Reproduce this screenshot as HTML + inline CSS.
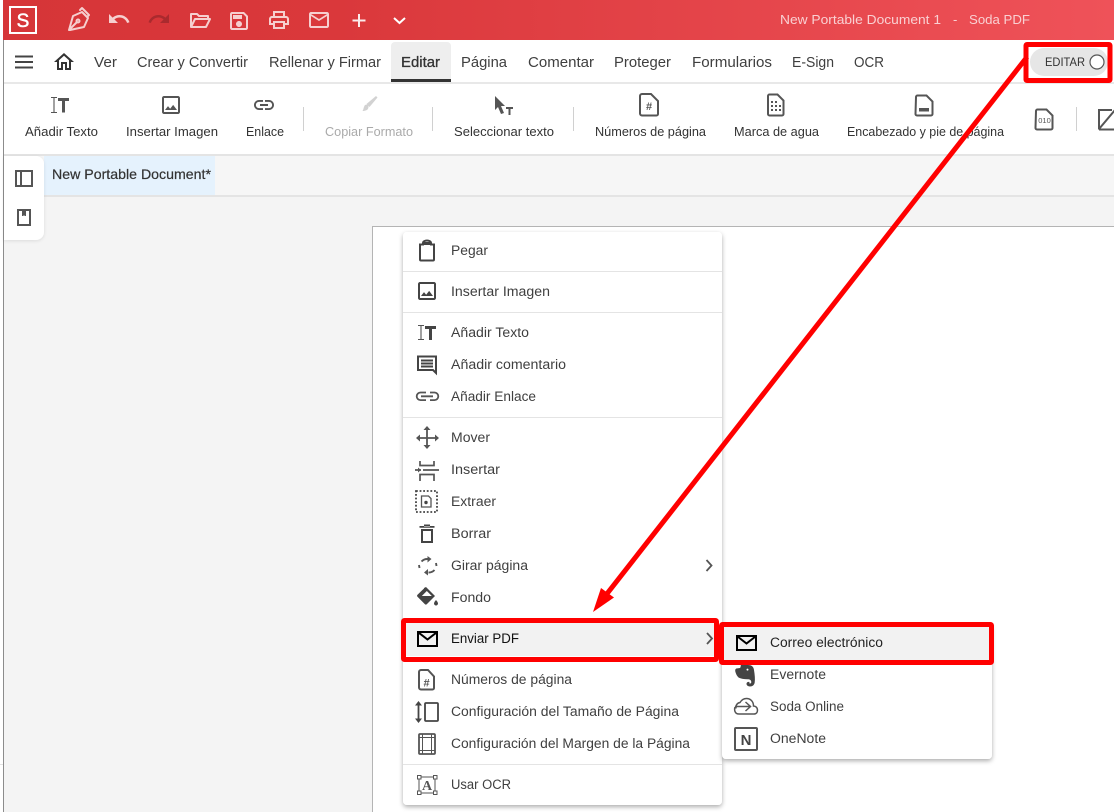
<!DOCTYPE html>
<html><head><meta charset="utf-8"><style>
html,body{margin:0;padding:0;background:#fff;overflow:hidden}
svg{display:block}
text{font-family:"Liberation Sans",sans-serif}
.m{font-size:14.5px;fill:#3f3f3f}
.t{font-size:12.5px;fill:#333}
.i{font-size:13.5px;fill:#3f3f3f}
.ic{fill:#555}
.st{fill:none;stroke:#555;stroke-width:2}
.tb{fill:#f6cfcf}
.tbs{fill:none;stroke:#f6cfcf;stroke-width:2}
</style></head><body>
<svg width="1114" height="812" viewBox="0 0 1114 812" xmlns="http://www.w3.org/2000/svg">
<defs>
<linearGradient id="g" x1="0" x2="1" y1="0" y2="0"><stop offset="0" stop-color="#d63538"/><stop offset=".3" stop-color="#da383b"/><stop offset="1" stop-color="#ef5259"/></linearGradient>
<filter id="sh" x="-10%" y="-10%" width="120%" height="120%"><feDropShadow dx="0" dy="2" stdDeviation="2.5" flood-color="#000" flood-opacity=".32"/></filter>
<filter id="sh2" x="-20%" y="-20%" width="140%" height="140%"><feDropShadow dx="0" dy="1" stdDeviation="1.5" flood-color="#000" flood-opacity=".1"/></filter>
</defs>
<rect width="1114" height="812" fill="#fff"/>
<rect x="3" y="0" width="1111" height="40" fill="url(#g)"/>
<rect x="3" y="40" width="1" height="772" fill="#8c8c8c"/>
<rect x="0" y="764" width="3" height="1" fill="#e2e2e2"/>
<!-- backgrounds -->
<rect x="4" y="82" width="1110" height="2" fill="#e8e8e8"/>
<rect x="4" y="155" width="1110" height="657" fill="#f4f4f4"/>
<rect x="4" y="154" width="1110" height="2" fill="#e4e4e4"/>
<rect x="4" y="156" width="1110" height="39" fill="#f6f6f6"/>
<rect x="44" y="156" width="171" height="39" fill="#e5f2fd"/>
<rect x="4" y="195" width="1110" height="2" fill="#e4e4e4"/>
<rect x="372.500" y="226.500" width="742" height="600" fill="#fff" stroke="#b4b4b4"/>
<!-- title bar -->
<rect x="10" y="7" width="26" height="26" fill="none" stroke="#fff" stroke-width="2"/>
<text x="23" y="27" text-anchor="middle" style="font-size:19px;stroke:#fff;stroke-width:.5" fill="#fff">S</text>
<g class="tbs" stroke-linejoin="round" stroke-linecap="round">
<path d="M69 30l4-14 9-4 6 6-4 9-14 3zM69 30l8-8M80 10l2-2 7 7-2 2"/><circle cx="78" cy="21" r="1.500"/>
<path d="M191 27V14h6l2 2h9v3M191 27l4-8h15l-4 8z"/>
</g>
<path class="tb" transform="translate(107,7)" d="M12.500 8c-2.650 0-5.050.99-6.900 2.600L2 7v9h9l-3.620-3.620c1.390-1.160 3.160-1.880 5.120-1.880 3.540 0 6.550 2.310 7.600 5.500l2.370-.78C21.080 11.030 17.150 8 12.500 8z"/>
<path fill="#aa2a2e" transform="translate(147,7)" d="M18.400 10.600C16.550 8.990 14.150 8 11.500 8c-4.650 0-8.580 3.030-10 7.220L3.900 16c1.050-3.190 4.050-5.500 7.600-5.500 1.950 0 3.730.72 5.120 1.880L13 16h9V7l-3.600 3.600z"/>
<path class="tb" transform="translate(227,9)" d="M17 3H5c-1.110 0-2 .9-2 2v14c0 1.100.89 2 2 2h14c1.100 0 2-.9 2-2V7l-4-4zm2 16H5V5h11.170L19 7.830V19zm-7-7c-1.660 0-3 1.340-3 3s1.340 3 3 3 3-1.340 3-3-1.340-3-3-3zM6 6h9v4H6z"/>
<path class="tb" transform="translate(267,8)" d="M19 8h-1V3H6v5H5c-1.660 0-3 1.340-3 3v6h4v4h12v-4h4v-6c0-1.660-1.340-3-3-3zM8 5h8v3H8V5zm8 12v2H8v-4h8v2zm2-2v-2H6v2H4v-4c0-.55.45-1 1-1h14c.55 0 1 .45 1 1v4h-2z"/>
<path class="tb" transform="translate(307,8)" d="M22 6c0-1.100-.9-2-2-2H4c-1.100 0-2 .9-2 2v12c0 1.100.9 2 2 2h16c1.100 0 2-.9 2-2V6zm-2 0l-8 5-8-5h16zm0 12H4V8l8 5 8-5v10z"/>
<path d="M359 14v13M352.500 20.500h13" stroke="#fff" stroke-width="2" opacity=".9"/>
<path d="M394 18l5.500 5 5.500-5" fill="none" stroke="#fff" stroke-width="2"/>
<g style="font-size:13px" fill="#f9d0d2">
<text x="780" y="24" textLength="161" lengthAdjust="spacingAndGlyphs">New Portable Document 1</text>
<text x="953" y="24">-</text>
<text x="969" y="24" textLength="61" lengthAdjust="spacingAndGlyphs">Soda PDF</text>
</g>
<!-- menu row -->
<path d="M391 46a4 4 0 0 1 4-4h52a4 4 0 0 1 4 4v36h-60z" fill="#eee"/>
<rect x="391" y="79" width="60" height="3" fill="#333"/>
<path d="M15 56.500h18M15 62h18M15 67.500h18" stroke="#444" stroke-width="2"/>
<path fill="#333" transform="translate(52,50)" d="M12 5.690l5 4.500V18h-2v-6H9v6H7v-7.810l5-4.500M12 3L2 12h3v8h6v-6h2v6h6v-8h3L12 3z"/>
<text class="m" x="94" y="67" textLength="23" lengthAdjust="spacingAndGlyphs">Ver</text>
<text class="m" x="137" y="67" textLength="111" lengthAdjust="spacingAndGlyphs">Crear y Convertir</text>
<text class="m" x="269" y="67" textLength="112" lengthAdjust="spacingAndGlyphs">Rellenar y Firmar</text>
<text class="m" x="401" y="67" textLength="39" lengthAdjust="spacingAndGlyphs" style="fill:#333;stroke:#333;stroke-width:.3">Editar</text>
<text class="m" x="461" y="67" textLength="46" lengthAdjust="spacingAndGlyphs">Página</text>
<text class="m" x="528" y="67" textLength="66" lengthAdjust="spacingAndGlyphs">Comentar</text>
<text class="m" x="614" y="67" textLength="57" lengthAdjust="spacingAndGlyphs">Proteger</text>
<text class="m" x="692" y="67" textLength="80" lengthAdjust="spacingAndGlyphs">Formularios</text>
<text class="m" x="792" y="67" textLength="42" lengthAdjust="spacingAndGlyphs">E-Sign</text>
<text class="m" x="854" y="67" textLength="30" lengthAdjust="spacingAndGlyphs">OCR</text>
<rect x="1030" y="48" width="78" height="28" rx="14" fill="#e6e6e6"/>
<text x="1045" y="66" textLength="40" lengthAdjust="spacingAndGlyphs" style="font-size:12px" fill="#333">EDITAR</text>
<circle cx="1097" cy="62" r="7" fill="#fff" stroke="#555" stroke-width="1.200"/>
<!-- toolbar icons -->
<g fill="#555">
<path d="M51 97.500h6M51 112.500h6M54 97.500v15" stroke="#555" stroke-width="1.100" fill="none"/>
<path d="M58 98h11v3h-4v11.500h-3V101h-4z"/>
<path transform="translate(159,93)" d="M19 5v14H5V5h14m0-2H5c-1.100 0-2 .9-2 2v14c0 1.100.9 2 2 2h14c1.100 0 2-.9 2-2V5c0-1.100-.9-2-2-2zm-4.860 8.860l-3 3.870L9 13.140 6 17h12l-3.860-5.140z"/>
<path transform="translate(252,93)" d="M3.900 12c0-1.710 1.390-3.100 3.100-3.100h4V7H7c-2.760 0-5 2.240-5 5s2.240 5 5 5h4v-1.900H7c-1.710 0-3.100-1.390-3.100-3.100zM8 13h8v-2H8v2zm9-6h-4v1.900h4c1.710 0 3.100 1.390 3.100 3.100s-1.390 3.100-3.100 3.100h-4V17h4c2.760 0 5-2.240 5-5s-2.240-5-5-5z"/>
<path d="M495 96l10 10h-4l3 7-3 1-3-7-3 3zM506 107h7v2h-2.500v6h-2v-6H506z"/>
</g>
<path d="M376 96l1.500 1.500-8 9.500-3-3zM365 105c2-1 3.500 0 3.500 2 0 3-3 4-6 4 1-1 1-4 2.500-6z" fill="#d2d2d2"/>
<path d="M303.500 107v24M432.500 107v24M573.500 107v24M1076.500 107v24" stroke="#d0d0d0"/>
<path class="st" d="M640 96a2 2 0 0 1 2-2h9l7 7v13a1.500 1.500 0 0 1-1.500 1.500H642a2 2 0 0 1-2-2z"/>
<text x="649" y="110" text-anchor="middle" style="font-size:11px;font-weight:bold" fill="#555">#</text>
<path class="st" d="M768 96a1.500 1.500 0 0 1 1.500-1.500h8l6 6V114a1.500 1.500 0 0 1-1.500 1.500h-12.500a1.500 1.500 0 0 1-1.500-1.500z"/>
<g fill="#555"><path d="M771 101h2v2h-2zM775 101h2v2h-2zM771 105h2v2h-2zM775 105h2v2h-2zM779 105h2v2h-2zM771 109h2v2h-2zM775 109h2v2h-2zM779 109h2v2h-2z"/></g>
<path class="st" d="M916 97a1.500 1.500 0 0 1 1.500-1.500h9l6 6V114a1.500 1.500 0 0 1-1.500 1.500h-14a1.500 1.500 0 0 1-1.500-1.500z"/>
<path d="M919 108h10v3.500h-10z" fill="#555"/>
<path class="st" d="M1036 111a1.500 1.500 0 0 1 1.500-1.500h9l6 6V128a1.500 1.500 0 0 1-1.500 1.500h-14a1.500 1.500 0 0 1-1.500-1.500z"/>
<text x="1044.500" y="123" text-anchor="middle" style="font-size:7.500px" fill="#555">010</text>
<path class="st" d="M1099 129.500V110h13M1099 129.500h16M1099 129l16-19"/>
<text class="t" x="25" y="136" textLength="73" lengthAdjust="spacingAndGlyphs">Añadir Texto</text>
<text class="t" x="126" y="136" textLength="92" lengthAdjust="spacingAndGlyphs">Insertar Imagen</text>
<text class="t" x="246" y="136" textLength="38" lengthAdjust="spacingAndGlyphs">Enlace</text>
<text class="t" x="325" y="136" textLength="88" lengthAdjust="spacingAndGlyphs" style="fill:#aaa">Copiar Formato</text>
<text class="t" x="454" y="136" textLength="100" lengthAdjust="spacingAndGlyphs">Seleccionar texto</text>
<text class="t" x="595" y="136" textLength="111" lengthAdjust="spacingAndGlyphs">Números de página</text>
<text class="t" x="734" y="136" textLength="85" lengthAdjust="spacingAndGlyphs">Marca de agua</text>
<text class="t" x="847" y="136" textLength="157" lengthAdjust="spacingAndGlyphs">Encabezado y pie de página</text>
<!-- sidebar + tab -->
<path d="M4 156h32a8 8 0 0 1 8 8v68a8 8 0 0 1-8 8H4z" fill="#fff" filter="url(#sh2)"/>
<path class="st" d="M16 171h16v15H16zM21 171v15"/>
<path class="st" d="M18 210h12v15H18z"/><path d="M22 210h4v6h-1.300l-.7-1-.7 1H22z" fill="#555"/>
<text x="52" y="179" textLength="159" lengthAdjust="spacingAndGlyphs" style="font-size:14px;stroke:#333;stroke-width:.2" fill="#333">New Portable Document*</text>
<!-- context menu -->
<rect x="403" y="232" width="319" height="573" rx="4" fill="#fff" filter="url(#sh)"/>
<g fill="#e4e4e4"><rect x="403" y="271" width="319" height="1"/><rect x="403" y="312" width="319" height="1"/><rect x="403" y="417" width="319" height="1"/><rect x="403" y="764" width="319" height="1"/></g>
<rect x="406" y="622" width="310" height="34" fill="#f2f2f2"/>
<text class="i" x="451" y="255" textLength="37" lengthAdjust="spacingAndGlyphs">Pegar</text>
<text class="i" x="451" y="296" textLength="99" lengthAdjust="spacingAndGlyphs">Insertar Imagen</text>
<text class="i" x="451" y="337" textLength="78" lengthAdjust="spacingAndGlyphs">Añadir Texto</text>
<text class="i" x="451" y="369" textLength="115" lengthAdjust="spacingAndGlyphs">Añadir comentario</text>
<text class="i" x="451" y="401" textLength="85" lengthAdjust="spacingAndGlyphs">Añadir Enlace</text>
<text class="i" x="451" y="442" textLength="39" lengthAdjust="spacingAndGlyphs">Mover</text>
<text class="i" x="451" y="474" textLength="49" lengthAdjust="spacingAndGlyphs">Insertar</text>
<text class="i" x="451" y="506" textLength="45" lengthAdjust="spacingAndGlyphs">Extraer</text>
<text class="i" x="451" y="538" textLength="40" lengthAdjust="spacingAndGlyphs">Borrar</text>
<text class="i" x="451" y="570" textLength="77" lengthAdjust="spacingAndGlyphs">Girar página</text>
<text class="i" x="451" y="602" textLength="40" lengthAdjust="spacingAndGlyphs">Fondo</text>
<text class="i" x="451" y="643" textLength="68" lengthAdjust="spacingAndGlyphs" style="fill:#111">Enviar PDF</text>
<text class="i" x="451" y="684" textLength="121" lengthAdjust="spacingAndGlyphs">Números de página</text>
<text class="i" x="451" y="716" textLength="228" lengthAdjust="spacingAndGlyphs">Configuración del Tamaño de Página</text>
<text class="i" x="451" y="748" textLength="239" lengthAdjust="spacingAndGlyphs">Configuración del Margen de la Página</text>
<text class="i" x="451" y="789" textLength="60" lengthAdjust="spacingAndGlyphs">Usar OCR</text>
<!-- menu icons -->
<path class="st" d="M420 244.500h3v-1.500a4 2.500 0 0 1 8 0v1.500h3v15a1 1 0 0 1-1 1h-12a1 1 0 0 1-1-1z" style="stroke:#444"/>
<path d="M424 242h6v3h-6z" fill="#444"/>
<path fill="#444" transform="translate(415,279)" d="M19 5v14H5V5h14m0-2H5c-1.100 0-2 .9-2 2v14c0 1.100.9 2 2 2h14c1.100 0 2-.9 2-2V5c0-1.100-.9-2-2-2zm-4.860 8.860l-3 3.870L9 13.140 6 17h12l-3.860-5.140z"/>
<path d="M418 325.500h6M418 339.500h6M421 325.500v14" stroke="#555" stroke-width="1.100" fill="none"/>
<path d="M425 326h11v3h-4v11h-3v-11h-4z" fill="#444"/>
<path d="M418 356.500h18v16.500l-3-3h-15zM421 360.500h12M421 363.500h12M421 366.500h12" fill="none" stroke="#444" stroke-width="2"/>
<path d="M426 392.500h-5.500a3.800 3.800 0 0 0 0 7.600H426M430 392.500h4.500a3.800 3.800 0 0 1 0 7.600H430M421 396.300h12" fill="none" stroke="#555" stroke-width="1.800"/>
<path d="M427 428v20M417 438h21" stroke="#555" stroke-width="1.800"/>
<path d="M427 426l-3.500 4h7zM427 449l-3.500-4h7zM416 438l4-3.500v7zM439 438l-4-3.500v7z" fill="#555"/>
<path d="M420 461v4.500h14V461M420 481v-6.500h14V481M423 470h16M415 470h6" fill="none" stroke="#555" stroke-width="1.700"/>
<path d="M421 470l-3-2.500v5z" fill="#555"/>
<rect x="416" y="491" width="21" height="21" fill="none" stroke="#444" stroke-width="1.800" stroke-dasharray="1.800 1.800"/>
<path d="M421.500 496h7l2.500 2.500v8.500h-9.500z" fill="none" stroke="#555" stroke-width="1.300"/><circle cx="426" cy="502.500" r="1.700" fill="#444"/>
<path fill="#444" d="M421 529h12v14h-12zM423 531v10h8v-10zM419.500 526h15v1.800h-15zM424 524.500h6v2h-6z" fill-rule="evenodd"/>
<path d="M421.500 561.500a8 8 0 0 1 6-2.500M434.500 570a8 8 0 0 1-6 2.500M419.500 568l-.5-3M436 563l.5 3" fill="none" stroke="#555" stroke-width="1.900"/>
<path d="M427.500 556l4 3-4 3.500zM428 569l-4 3.500 4 3z" fill="#555"/>
<path d="M424 588l2-1 9 9-8 8c-.8.8-1.500.8-2.300 0l-7.200-7.200c-.6-.6-.6-1.400 0-2l6.500-6.300z" fill="#444"/>
<path d="M426.800 591l5 5h-10z" fill="#fff"/>
<path d="M436 600s-2 2.100-2 3.500c0 1.100.9 2 2 2s2-.9 2-2c0-1.400-2-3.500-2-3.500z" fill="#444"/>
<path d="M418 632h19v14h-19zM418.500 632.500l9 7 9-7" fill="none" stroke="#000" stroke-width="2"/>
<path class="st" d="M419 672a2 2 0 0 1 2-2h7l6 6.500V688a1.500 1.500 0 0 1-1.500 1.500H421a2 2 0 0 1-2-2z"/>
<text x="426.500" y="686.500" text-anchor="middle" style="font-size:11px;font-weight:bold" fill="#555">#</text>
<path d="M418.500 704v16" stroke="#444" stroke-width="1.800"/><path d="M418.500 701l-3.500 4.500h7zM418.500 723l-3.500-4.500h7z" fill="#444"/>
<rect x="425" y="703" width="13" height="18" rx="1" fill="none" stroke="#444" stroke-width="1.800"/>
<rect x="419" y="734" width="16" height="20" rx="1" fill="none" stroke="#555" stroke-width="1.800"/>
<path d="M422.500 734v20M431.500 734v20M419 737.500h16M419 750.500h16" stroke="#555" stroke-width="1"/>
<rect x="419" y="777" width="16" height="16" fill="none" stroke="#555" stroke-width="1"/>
<g fill="#fff" stroke="#555" stroke-width="1"><rect x="417.500" y="775.500" width="3.500" height="3.500"/><rect x="433.500" y="775.500" width="3.500" height="3.500"/><rect x="417.500" y="791" width="3.500" height="3.500"/><rect x="433.500" y="791" width="3.500" height="3.500"/></g>
<text x="427" y="790" text-anchor="middle" style="font-family:'Liberation Serif',serif;font-size:14px;font-weight:bold" fill="#555">A</text>
<path d="M706.500 560l5 5.500-5 5.500" fill="none" stroke="#555" stroke-width="1.800"/>
<path d="M707 633l5 5.500-5 5.500" fill="none" stroke="#555" stroke-width="1.800"/>
<!-- submenu -->
<rect x="722" y="624" width="270" height="135" rx="4" fill="#fff" filter="url(#sh)"/>
<rect x="724" y="627" width="266" height="33" fill="#f2f2f2"/>
<text class="i" x="770" y="647" textLength="113" lengthAdjust="spacingAndGlyphs" style="fill:#222">Correo electrónico</text>
<text class="i" x="770" y="679" textLength="56" lengthAdjust="spacingAndGlyphs">Evernote</text>
<text class="i" x="770" y="711" textLength="74" lengthAdjust="spacingAndGlyphs">Soda Online</text>
<text class="i" x="770" y="743" textLength="56" lengthAdjust="spacingAndGlyphs">OneNote</text>
<path d="M737 636h19v14h-19zM737.500 636.500l9 7 9-7" fill="none" stroke="#000" stroke-width="2"/>
<path d="M741 665h7c3.500 0 5.500 1.500 6 5 .8 5 1.200 9 .7 12.500-.4 2.500-2.200 4-4.700 4-2 0-3.500-1.100-3.500-2.700 0-1.700 1.700-2.300 3-1.800l-.2 1.300c1 .5 2 0 2-1.300-.2-1.800-1.300-2.700-3.800-2.700-3.500 0-6.500-.5-8.500-1.500-1.500-1-3-3.500-3.700-6.300-.3-1.500 0-2.500 1-3l3.700-.5c.7-.7.8-2 .8-3.500z" fill="#444"/>
<path d="M746.500 669.500a1 1 0 0 1 2 .2 1 1 0 0 1-2-.2z" fill="#fff"/>
<path d="M739 714h15c2.500 0 3.500-2 3.500-4 0-2.500-2-4-4-4 0-5-3.500-7.500-7-7.500-3 0-5 1.500-6.500 4-3 .5-4.500 3-4 6M735 706.500h15M745.500 702l5 4.500-5 4.500M735 707c-1 3.500 0 7 4 7" fill="none" stroke="#555" stroke-width="1.500"/>
<rect x="735" y="728" width="22" height="22" rx="1" fill="none" stroke="#555" stroke-width="2"/>
<text x="746" y="745" text-anchor="middle" style="font-size:15px;font-weight:bold" fill="#444">N</text>
<!-- annotations -->
<rect x="1026" y="44.500" width="84" height="36" fill="none" stroke="#f00" stroke-width="5" rx="1"/>
<rect x="403.500" y="620.500" width="313" height="39" fill="none" stroke="#f00" stroke-width="5" rx="1"/>
<rect x="721.500" y="624.500" width="270" height="38" fill="none" stroke="#f00" stroke-width="5" rx="1"/>
<path d="M1027 57L606 595" stroke="#f00" stroke-width="5" fill="none"/>
<path d="M593 612l8-24 13 9.500z" fill="#f00"/>
</svg>
</body></html>
